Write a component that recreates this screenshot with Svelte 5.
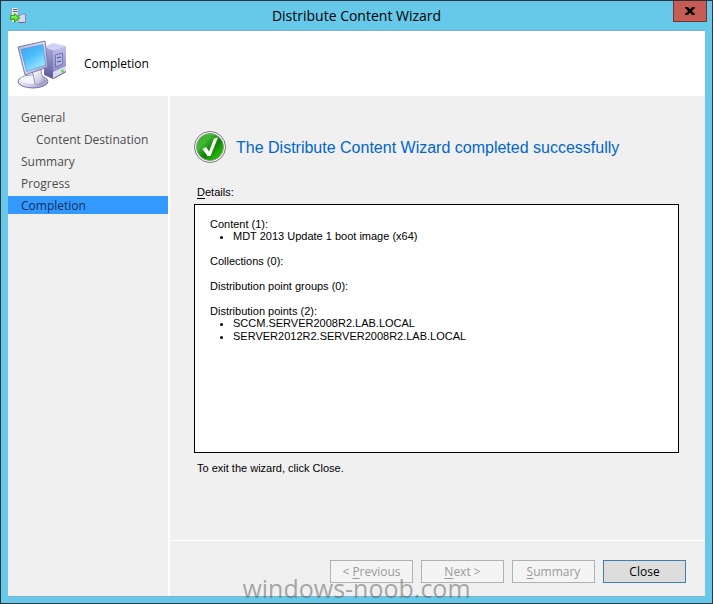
<script lang="ts">
  const title = 'Distribute Content Wizard';

  const steps = [
    { label: 'General' },
    { label: 'Content Destination', sub: true },
    { label: 'Summary' },
    { label: 'Progress' },
    { label: 'Completion' },
  ];

  const current = 'Completion';

  const details = [
    { name: 'Content', items: ['MDT 2013 Update 1 boot image (x64)'] },
    { name: 'Collections', items: [] },
    { name: 'Distribution point groups', items: [] },
    {
      name: 'Distribution points',
      items: ['SCCM.SERVER2008R2.LAB.LOCAL', 'SERVER2012R2.SERVER2008R2.LAB.LOCAL'],
    },
  ];
</script>

<div class="window">
  <header class="titlebar">
    <svg class="app-icon" width="16" height="16" viewBox="0 0 16 16" aria-hidden="true">
      <path d="M1 0h7v14H1z" fill="#e6e6ea" />
      <path d="M1.500 0v14M8 0v6" stroke="#a3a6b0" />
      <path d="M3 1.500h4M3 3.500h4" stroke="#5f636e" />
      <path d="M8 14.500V7.500h2.500l1-1.500H15.500v8.500z" fill="#d3d7f0" stroke="#8589b5" />
      <path d="M9 14.500h6" stroke="#63668f" />
      <path d="M0.500 7.500h4v-2L10 9.800 4.500 14.200v-2.700h-4z" fill="#5fdc35" stroke="#2fa51b" />
      <path d="M1.500 8.800h4v-1" stroke="#a9f287" fill="none" />
    </svg>
    <h1>{title}</h1>
    <button class="close-x" aria-label="Close window">
      <svg width="10" height="8" viewBox="0 0 10 8" aria-hidden="true">
        <path d="M0 0h3l2 2.500L7 0h3v1L6.800 4 10 7v1H7L5 5.500 3 8H0V7l3.200-3L0 1z" fill="#000" />
      </svg>
    </button>
  </header>

  <div class="client">
    <div class="banner">
      <svg width="50" height="50" viewBox="0 0 50 50" aria-hidden="true">
        <defs>
          <linearGradient id="screen" x1="0" y1="0" x2=".6" y2="1">
            <stop offset="0" stop-color="#3d9ff0" />
            <stop offset=".5" stop-color="#4cbcfc" />
            <stop offset="1" stop-color="#a0eaff" />
          </linearGradient>
          <linearGradient id="frame" x1="0" y1="0" x2="1" y2="1">
            <stop offset="0" stop-color="#a9a9d3" />
            <stop offset=".5" stop-color="#dfe0f5" />
            <stop offset="1" stop-color="#8f8ec4" />
          </linearGradient>
          <linearGradient id="side" x1="0" y1="0" x2="0" y2="1">
            <stop offset="0" stop-color="#a8a9de" />
            <stop offset="1" stop-color="#5a5998" />
          </linearGradient>
          <linearGradient id="front" x1="0" y1="0" x2="0" y2="1">
            <stop offset="0" stop-color="#c0c1ee" />
            <stop offset="1" stop-color="#7c7bbf" />
          </linearGradient>
          <linearGradient id="stand" x1="0" y1="0" x2="1" y2="1">
            <stop offset="0" stop-color="#ffffff" />
            <stop offset=".6" stop-color="#d2d2e8" />
            <stop offset="1" stop-color="#7d7bb0" />
          </linearGradient>
        </defs>
        <path d="M27 8l9 3v29l-9-4z" fill="url(#side)" />
        <path d="M36 11l13-4v26l-13 7z" fill="url(#front)" />
        <path d="M27 8l9-4 13 3-13 4z" fill="#cfd0f4" />
        <path d="M38.500 16l7-2v11l-7 3z" fill="#b5b6e6" stroke="#7574b2" />
        <path d="M40 19l4-1M40 23l4-1" stroke="#49487f" />
        <path d="M36 33l13-6v6l-13 7z" fill="#dcdcee" />
        <path d="M36.500 39.500l12.500-7" stroke="#5b5a90" fill="none" />
        <circle cx="45.500" cy="32" r="1.500" fill="#5fdb3c" />
        <ellipse cx="16" cy="42.500" rx="15" ry="6.500" fill="url(#stand)" stroke="#7473a6" />
        <ellipse cx="15" cy="40.500" rx="12" ry="4" fill="#f5f5fc" />
        <path d="M15 33l9-3c0 6 2 9 5 12-3 3-8 4-11 3-1-4-1-8-3-12z" fill="url(#stand)" stroke="#9695bd" />
        <path d="M1 8l27-6 3 26-23 8z" fill="url(#frame)" stroke="#7c7bb0" stroke-linejoin="round" />
        <path d="M4 10.500l22-5L28.500 26 9.500 32.500z" fill="url(#screen)" stroke="#3d84c9" stroke-width=".5" />
      </svg>
      <h2>Completion</h2>
    </div>

    <div class="body">
      <nav aria-label="Wizard steps">
        {#each steps as step}
          <a
            href="#{step.label}"
            class:sub={step.sub}
            class:active={step.label === current}
            aria-current={step.label === current ? 'step' : undefined}>{step.label}</a>
        {/each}
      </nav>

      <div class="page">
        <main>
          <div class="result">
            <svg width="32" height="32" viewBox="0 0 32 32" aria-hidden="true">
              <defs>
                <linearGradient id="ball" x1="0" y1="0" x2="1" y2="1">
                  <stop offset="0" stop-color="#45a838" />
                  <stop offset=".3" stop-color="#41b932" />
                  <stop offset=".55" stop-color="#0d8205" />
                  <stop offset="1" stop-color="#35dd0a" />
                </linearGradient>
              </defs>
              <circle cx="16" cy="16" r="15.500" fill="#fff" stroke="#777" />
              <circle cx="16" cy="16" r="13.500" fill="url(#ball)" stroke="#8a9a88" />
              <path d="M8.500 18l3.500-2 3 4.500L20 7.500l4-1L16.500 25h-3z" fill="#fff" />
            </svg>
            <p>The Distribute Content Wizard completed successfully</p>
          </div>

          <h3 id="details-label"><u>D</u>etails:</h3>
          <div class="details" role="region" aria-labelledby="details-label">
            {#each details as group}
              <section>
                <p>{group.name} ({group.items.length}):</p>
                {#if group.items.length > 0}
                  <ul>
                    {#each group.items as item}
                      <li>{item}</li>
                    {/each}
                  </ul>
                {/if}
              </section>
            {/each}
          </div>
          <p class="hint">To exit the wizard, click Close.</p>
        </main>

        <footer>
          <button disabled>&lt; <u>P</u>revious</button>
          <button disabled><u>N</u>ext &gt;</button>
          <button disabled><u>S</u>ummary</button>
          <button class="primary">Close</button>
        </footer>
      </div>
    </div>
  </div>

  <div class="watermark">windows-noob.com</div>
</div>

<style>
  :global(body) {
    margin: 0;
  }

  .window {
    position: relative;
    box-sizing: border-box;
    min-height: 100vh;
    display: flex;
    flex-direction: column;
    padding: 0 7px 6px;
    border: 1px solid #30343c;
    background: #66c9ea;
    font-family: 'Segoe UI', 'Open Sans', sans-serif;
    font-size: 12px;
    line-height: 16px;
    color: #000;
  }

  h1, h2, h3, p, ul {
    margin: 0;
    padding: 0;
    font-size: inherit;
    font-weight: normal;
  }

  .titlebar {
    display: grid;
    grid-template-columns: 48px 1fr 48px;
    height: 29px;
    align-items: center;
  }

  .app-icon {
    margin-left: 2px;
  }

  .titlebar h1 {
    font-size: 14px;
    line-height: 20px;
    text-align: center;
  }

  .close-x {
    align-self: start;
    justify-self: end;
    display: flex;
    align-items: center;
    justify-content: center;
    width: 34px;
    height: 21px;
    margin-right: -2px;
    padding: 0;
    border: 1px solid #6d3232;
    border-top: 0;
    background: #c75c54;
  }

  .client {
    flex: 1;
    display: flex;
    flex-direction: column;
    border-top: 1px solid #7fb2c9;
    border-bottom: 1px solid #7fb2c9;
    background: #f0f0f0;
  }

  .banner {
    display: flex;
    align-items: center;
    gap: 17px;
    height: 65px;
    padding-left: 9px;
    background: #fff;
  }

  .body {
    flex: 1;
    display: flex;
  }

  nav {
    width: 160px;
    display: flex;
    flex-direction: column;
    gap: 4px;
    padding-top: 12px;
    border-right: 2px solid #fff;
  }

  nav a {
    padding: 2px 13px 0;
    color: #4c4c4c;
    text-decoration: none;
  }

  nav a.sub {
    padding-left: 28px;
  }

  nav a.active {
    background: #3399ff;
    color: #0d2f5c;
  }

  .page {
    flex: 1;
    display: flex;
    flex-direction: column;
  }

  main {
    flex: 1;
    display: flex;
    flex-direction: column;
    padding: 35px 26px 64px 24px;
    font-family: 'Microsoft Sans Serif', 'Liberation Sans', sans-serif;
    font-size: 11px;
  }

  .result {
    display: flex;
    align-items: center;
    gap: 10px;
    margin-bottom: 21px;
  }

  .result p {
    padding-top: 2px;
    font-size: 16px;
    line-height: 20px;
    color: #0066cc;
  }

  main h3 {
    margin: 0 3px 4px;
  }

  .details {
    flex: 1;
    padding: 13px 15px;
    border: 1px solid #000;
    background: #fff;
    line-height: 13px;
  }

  .details section {
    margin-bottom: 12px;
  }

  .details ul {
    margin-top: -1px;
    padding-left: 23px;
  }

  .hint {
    margin: 7px 3px 0;
  }

  footer {
    display: flex;
    justify-content: flex-end;
    gap: 8px;
    padding: 19px 19px 13px;
    border-top: 1px solid #fff;
  }

  footer button {
    width: 83px;
    height: 23px;
    padding: 0;
    border: 1px solid #adb2b5;
    background: #f4f4f4;
    color: #9a9a9a;
    font: inherit;
  }

  footer .primary {
    border-color: #3c7fb1;
    background: #dddddd;
    color: #000;
  }

  u {
    text-underline-offset: 2px;
  }

  .watermark {
    position: absolute;
    left: 0;
    right: 0;
    bottom: 0;
    text-align: center;
    font-size: 25px;
    line-height: 30px;
    color: rgba(90, 90, 90, 0.5);
    pointer-events: none;
  }
</style>
